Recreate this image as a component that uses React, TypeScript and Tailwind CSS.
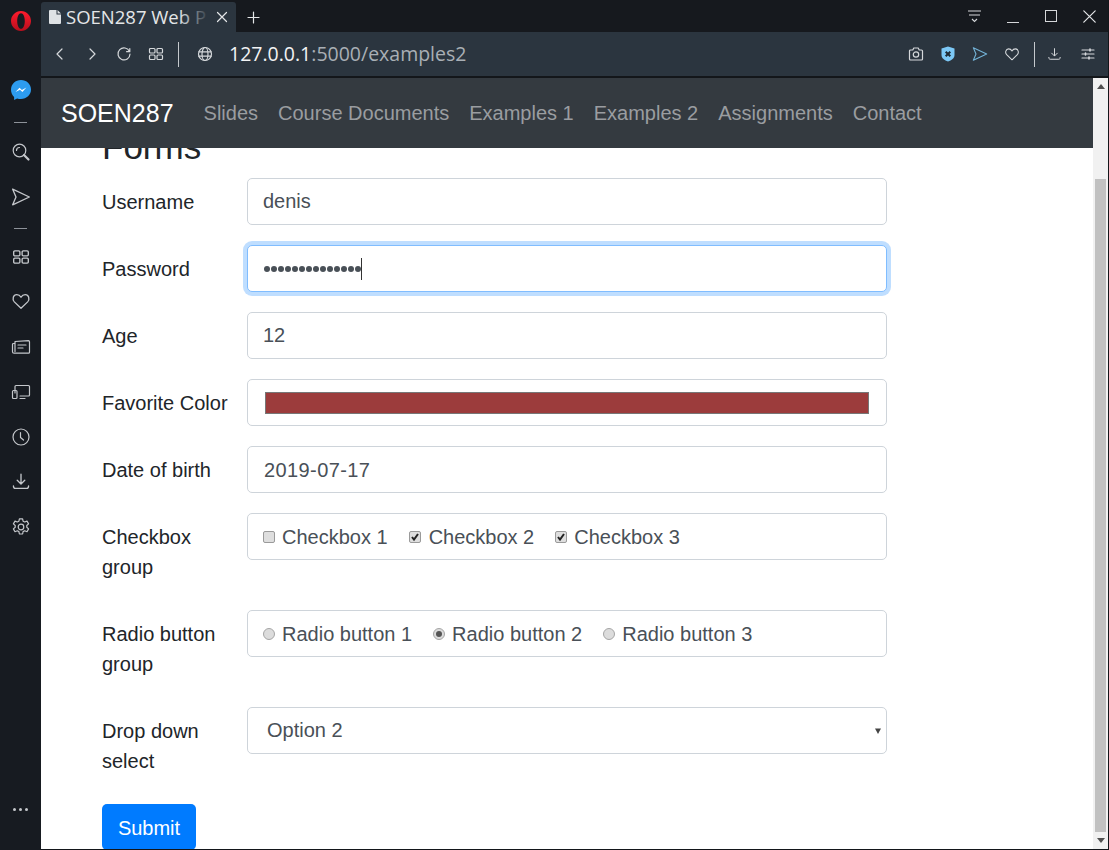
import React from "react";

const S = ({ size = 18, children, className = "", vb = 18 }: { size?: number; children: React.ReactNode; className?: string; vb?: number }) => (
  <svg width={size} height={size} viewBox={`0 0 ${vb} ${vb}`} fill="none" stroke="currentColor" strokeWidth={1.2} strokeLinecap="round" strokeLinejoin="round" className={className}>
    {children}
  </svg>
);

const Grid4 = ({ size = 16 }: { size?: number }) => (
  <S size={size} vb={16}>
    <rect x="1.5" y="2.5" width="5.5" height="4.5" rx="1" />
    <rect x="9" y="2.5" width="5.5" height="4.5" rx="1" />
    <rect x="1.5" y="9" width="5.5" height="4.5" rx="1" />
    <rect x="9" y="9" width="5.5" height="4.5" rx="1" />
  </S>
);
const Heart = ({ size = 18 }: { size?: number }) => (
  <S size={size}>
    <path d="M9 15.5 3 9.8C.9 7.6 1.9 3.2 5.2 3.2c1.7 0 3 1 3.8 2.4.8-1.4 2.1-2.4 3.8-2.4 3.3 0 4.3 4.4 2.2 6.6L9 15.5Z" />
  </S>
);
const Send = ({ size = 18, className = "" }: { size?: number; className?: string }) => (
  <S size={size} className={className}>
    <path d="M1.500 2 16.500 9 1.500 16 4.500 9Z" />
  </S>
);
const Download = ({ size = 18 }: { size?: number }) => (
  <S size={size}>
    <path d="M9 2v8.500M5.600 7.400 9 10.800l3.400-3.400M2.200 12.500c0 1.500.5 2.200 1.600 2.200h10.400c1.100 0 1.600-.7 1.600-2.200" />
  </S>
);
const Divider = () => <div className="w-[13px] h-px bg-[#8d9299] my-[2px]" />;

const Sidebar = () => (
  <aside className="w-[41px] shrink-0 h-full bg-[#171b21] text-[#c4c7cb] flex flex-col items-center">
    <svg width="20" height="20" viewBox="0 0 20 20" className="mt-[11px]">
      <defs>
        <linearGradient id="op" x1="0" y1="0" x2="0" y2="1">
          <stop offset="0" stopColor="#ff1b2d" />
          <stop offset="1" stopColor="#b70f1d" />
        </linearGradient>
      </defs>
      <path fillRule="evenodd" fill="url(#op)" d="M10 0c5.500 0 10 4.500 10 10s-4.500 10-10 10S0 15.500 0 10 4.500 0 10 0Zm0 2.200c-2.300 0-3.800 3.500-3.800 7.800s1.500 7.800 3.800 7.800 3.800-3.500 3.800-7.800-1.500-7.800-3.800-7.800Z" />
    </svg>
    <svg width="20" height="20" viewBox="0 0 20 20" className="mt-[49px]">
      <path d="M10 0C4.400 0 0 4.100 0 9.700c0 2.900 1.200 5.400 3.100 7.200V20l3-1.600c1.200.4 2.500.6 3.900.6 5.600 0 10-4.200 10-9.400C20 4.100 15.600 0 10 0Z" fill="#2d9cf0" />
      <path d="m4.500 12 4-4.300 2.400 2.200L15.400 7.500l-4 4.400-2.400-2.200L4.500 12Z" fill="#fff" />
    </svg>
    <div className="mt-[20px]"><Divider /></div>
    <div className="mt-[17px] flex flex-col items-center">
      <S size={20} vb={20}>
        <circle cx="8.500" cy="8.500" r="6.300" />
        <path d="M5.500 8.500a3 3 0 0 1 3-3" />
        <path d="M13 13l4.500 4.500" strokeWidth="2.200" />
      </S>
    </div>
    <div className="mt-[25px]"><Send size={20} /></div>
    <div className="mt-[19px]"><Divider /></div>
    <div className="mt-[17px]"><Grid4 size={18} /></div>
    <div className="mt-[25px]"><Heart size={20} /></div>
    <div className="mt-[26px]">
      <S size={20} vb={20}>
        <path d="M4 6.500V4.500l13.500-.8c.6 0 1 .4 1 1v10.500a1 1 0 0 1-1 1H3a1.500 1.500 0 0 1-1.500-1.500V7.500a1 1 0 0 1 1-1H4v8" />
        <path d="M7 8h8M7 11h5" />
      </S>
    </div>
    <div className="mt-[24px]">
      <S size={20} vb={20}>
        <path d="M4 12V5.500a1 1 0 0 1 1-1h12.500a1 1 0 0 1 1 1V14a1 1 0 0 1-1 1H9M9 17.500h5" />
        <rect x="1.500" y="9.500" width="4.500" height="8" rx="1" />
      </S>
    </div>
    <div className="mt-[26px]">
      <S size={20} vb={20}>
        <circle cx="10" cy="10" r="8" />
        <path d="M9.500 5.500v5l3 2.500" />
      </S>
    </div>
    <div className="mt-[25px]"><Download size={20} /></div>
    <div className="mt-[25px]">
      <S size={20} vb={20}>
        <circle cx="10" cy="10" r="2.800" />
        <path d="M8.400 1.800h3.200l.5 2.400 1.600.8 2.300-.9 1.600 2.800-1.800 1.600v1.800l1.800 1.600-1.600 2.800-2.300-.9-1.600.8-.5 2.400H8.400l-.5-2.400-1.600-.8-2.300.9-1.600-2.800 1.800-1.600V8.500L2.400 6.900 4 4.100l2.300.9 1.600-.8.500-2.400Z" />
      </S>
    </div>
    <div className="mt-auto mb-[39px] flex gap-[3px]">
      <span className="w-[3px] h-[3px] rounded-full bg-[#c4c7cb]" />
      <span className="w-[3px] h-[3px] rounded-full bg-[#c4c7cb]" />
      <span className="w-[3px] h-[3px] rounded-full bg-[#c4c7cb]" />
    </div>
  </aside>
);

const TabStrip = () => (
  <div className="h-[32px] shrink-0 bg-[#16191e] flex items-end text-[#e4e6e8]">
    <div className="w-[195px] h-[30px] ml-0 bg-[#2b353f] rounded-t-[3px] flex items-center pl-[8px] pr-[8px] overflow-hidden">
      <svg width="12" height="14" viewBox="0 0 12 14" fill="#dfe2e5" className="shrink-0 mr-[5px]">
        <path d="M0 1a1 1 0 0 1 1-1h6.500v4.500H12V13a1 1 0 0 1-1 1H1a1 1 0 0 1-1-1V1Z" />
        <path d="M8.500 0 12 3.500H8.500V0Z" />
      </svg>
      <div className="relative w-[143px] whitespace-nowrap text-[18.500px] leading-[24px] font-['Open_Sans','Noto_Sans',sans-serif]">
        SOEN287 Web P
        <span className="absolute inset-y-0 right-0 w-[30px] bg-gradient-to-r from-transparent to-[#2b353f]" />
      </div>
      <S size={12} vb={12} className="ml-auto shrink-0">
        <path d="m1.500 1.500 9 9M10.500 1.500l-9 9" />
      </S>
    </div>
    <div className="h-[30px] ml-[11px] flex items-center">
      <S size={13} vb={13}>
        <path d="M6.500 1v11M1 6.500h11" />
      </S>
    </div>
    <div className="ml-auto h-full flex items-center pr-[12px]">
      <svg width="15" height="13" viewBox="0 0 15 13" fill="none" stroke="#d5d7da" strokeWidth="1.100" className="mr-[25px]">
        <path d="M1 1h13M2 5h11M5 9l2.500 2.500L10 9" />
      </svg>
      <div className="w-[12px] h-px bg-[#d5d7da] mt-[12px] mr-[26px]" />
      <div className="w-[12px] h-[12px] border border-[#d5d7da] mr-[26px]" />
      <S size={13} vb={13}>
        <path d="m.8.800 11.400 11.400M12.200.800.800 12.200" />
      </S>
    </div>
  </div>
);

const Toolbar = () => (
  <div className="h-[46px] shrink-0 bg-[#2b353f] border-b-2 border-[#13161a] flex items-center text-[#d5d8db]">
    <div className="flex items-center pl-[12px]">
      <S size={14} vb={14}><path d="M9 2 4 7l5 5" /></S>
      <S size={14} vb={14} className="ml-[18px]"><path d="m5 2 5 5-5 5" /></S>
      <S size={16} vb={16} className="ml-[17px]"><path d="M13.500 5.500A6 6 0 1 0 14 8M13.800 2.500v3.200h-3.200" /></S>
      <div className="ml-[16px]"><Grid4 size={16} /></div>
      <div className="w-px h-[25px] bg-[#c5c9cd] ml-[14px]" />
      <S size={16} vb={16} className="ml-[18px]">
        <circle cx="8" cy="8" r="6.500" />
        <ellipse cx="8" cy="8" rx="3" ry="6.500" />
        <path d="M1.800 5.800h12.400M1.800 10.200h12.400" />
      </S>
    </div>
    <div className="ml-[16px] text-[19.500px] leading-[24px] font-['Open_Sans','Noto_Sans',sans-serif]">
      <span className="text-[#f2f3f4]">127.0.0.1</span><span className="text-[#a9afb5]">:5000/examples2</span>
    </div>
    <div className="ml-auto flex items-center pr-[13px]">
      <S size={16} vb={16}>
        <path d="M1.500 5a1 1 0 0 1 1-1h2.300l1-2h4.400l1 2h2.300a1 1 0 0 1 1 1v8a1 1 0 0 1-1 1h-11a1 1 0 0 1-1-1V5Z" />
        <circle cx="8" cy="8.500" r="2.700" />
      </S>
      <svg width="14" height="16" viewBox="0 0 14 16" className="ml-[17px]">
        <path d="M7 .5 13.500 2.500V9c0 3.200-3 5.300-6.500 6.500C3.500 14.300.5 12.200.5 9V2.500L7 .5Z" fill="#7cc8f6" />
        <path d="m4.700 5.700 4.600 4.600M9.300 5.700l-4.600 4.600" stroke="#1f2a33" strokeWidth="2" />
      </svg>
      <span className="ml-[17px] text-[#74b4d8]"><Send size={16} /></span>
      <span className="ml-[16px]"><Heart size={16} /></span>
      <div className="w-px h-[25px] bg-[#c5c9cd] ml-[14px]" />
      <span className="ml-[12px]"><Download size={15} /></span>
      <S size={14} vb={14} className="ml-[19px]">
        <path d="M1 3h12M1 7h12M1 11h12" />
        <path d="M9 2v2M4.500 6v2M8 10v2" strokeWidth="1.600" />
      </S>
    </div>
  </div>
);

const Nav = () => (
  <nav className="h-[70px] shrink-0 bg-[#343a40] flex items-center pl-[20px] text-[20px] leading-[30px]">
    <span className="text-[25px] leading-[38px] text-white mr-[30px]">SOEN287</span>
    <div className="flex gap-[20px] text-[#9a9da0]">
      <span>Slides</span>
      <span>Course Documents</span>
      <span>Examples 1</span>
      <span>Examples 2</span>
      <span>Assignments</span>
      <span>Contact</span>
    </div>
  </nav>
);

const box = "w-[640px] h-[47px] shrink-0 rounded-[5px] border border-[#ced4da] bg-white flex items-center text-[#495057]";

const Row = ({ label, className = "h-[47px] mb-[20px]", children }: { label: React.ReactNode; className?: string; children: React.ReactNode }) => (
  <div className={`flex ${className}`}>
    <label className="w-[145px] shrink-0 pt-[9px] pr-[10px] text-[#212529]">{label}</label>
    {children}
  </div>
);

const Check = ({ checked }: { checked?: boolean }) => (
  <span className="w-[12px] h-[12px] rounded-[2px] border border-[#9a9a9a] bg-[#dedede] mr-[7px] flex items-center justify-center">
    {checked && (
      <svg width="10" height="10" viewBox="0 0 10 10" fill="none" stroke="#222" strokeWidth="2">
        <path d="m2 5 2 2.500 4-5.500" />
      </svg>
    )}
  </span>
);
const Radio = ({ checked }: { checked?: boolean }) => (
  <span className="w-[12px] h-[12px] rounded-full border border-[#a5a5a5] bg-[#dcdcdc] mr-[7px] flex items-center justify-center">
    {checked && <span className="w-[6px] h-[6px] rounded-full bg-[#555]" />}
  </span>
);

const Form = () => (
  <div className="h-[701px] overflow-hidden pl-[61px] text-[20px] leading-[30px]">
    <h1 className="text-[35px] leading-[42px] -mt-[22px] mb-[10px] text-[#212529] font-normal">Forms</h1>
    <Row label="Username">
      <div className={`${box} pl-[15px] pb-[2px]`}>denis</div>
    </Row>
    <Row label="Password">
      <div className="w-[640px] h-[47px] shrink-0 rounded-[5px] border border-[#80bdff] bg-white flex items-center pl-[16px] text-[#495057] shadow-[0_0_0_4px_rgba(0,123,255,0.25)]">
        <span className="flex gap-px">
          {Array.from({ length: 14 }).map((_, i) => (
            <span key={i} className="w-[6px] h-[6px] rounded-full bg-[#495057]" />
          ))}
        </span>
        <span className="w-px h-[22px] bg-[#333]" />
      </div>
    </Row>
    <Row label="Age">
      <div className={`${box} pl-[15px] pb-[2px]`}>12</div>
    </Row>
    <Row label="Favorite Color">
      <div className={`${box} px-[17px]`}>
        <div className="w-full h-[22px] bg-[#9c3c3c] border border-[#777]" />
      </div>
    </Row>
    <Row label="Date of birth">
      <div className={`${box} pl-[16px] tracking-[0.4px]`}>2019-07-17</div>
    </Row>
    <Row label={<>Checkbox<br />group</>} className="h-[77px] mb-[20px]">
      <div className={`${box} pl-[15px]`}>
        <Check /><span className="mr-[21px]">Checkbox 1</span>
        <Check checked /><span className="ml-px mr-[21px]">Checkbox 2</span>
        <Check checked /><span>Checkbox 3</span>
      </div>
    </Row>
    <Row label={<>Radio button<br />group</>} className="h-[77px] mb-[20px]">
      <div className={`${box} pl-[15px]`}>
        <Radio /><span className="mr-[21px]">Radio button 1</span>
        <Radio checked /><span className="mr-[21px]">Radio button 2</span>
        <Radio /><span>Radio button 3</span>
      </div>
    </Row>
    <Row label={<>Drop down<br />select</>} className="h-[77px] mb-[20px]">
      <div className={`${box} pl-[19px] pr-[5px] justify-between`}>
        <span className="pb-[2px]">Option 2</span>
        <svg width="6" height="6" viewBox="0 0 6 6" fill="#444"><path d="M0 .5h6L3 6Z" /></svg>
      </div>
    </Row>
    <button className="block h-[46px] w-[94px] rounded-[5px] bg-[#007bff] text-white text-[20px] leading-[30px] pt-[2px]">Submit</button>
  </div>
);

const Scrollbar = () => (
  <div className="w-[15px] shrink-0 h-full bg-[#f1f1f1] flex flex-col items-center">
    <div className="h-[17px] flex items-center justify-center shrink-0">
      <svg width="8" height="5" viewBox="0 0 8 5" fill="#505050"><path d="M4 0 8 5H0Z" /></svg>
    </div>
    <div className="mt-[84px] w-[11px] h-[653px] bg-[#c1c1c1]" />
    <div className="h-[17px] flex items-center justify-center shrink-0 mt-auto">
      <svg width="8" height="5" viewBox="0 0 8 5" fill="#505050"><path d="M0 0h8L4 5Z" /></svg>
    </div>
  </div>
);

export default function App() {
  return (
    <div className="w-[1109px] h-[850px] overflow-hidden flex bg-[#171b21] font-['Liberation_Sans',Arial,sans-serif]">
      <Sidebar />
      <div className="flex-1 min-w-0 flex flex-col border-r border-b border-[#13161a]">
        <TabStrip />
        <Toolbar />
        <div className="flex-1 min-h-0 flex bg-white">
          <div className="flex-1 min-w-0 flex flex-col">
            <Nav />
            <Form />
          </div>
          <Scrollbar />
        </div>
      </div>
    </div>
  );
}
